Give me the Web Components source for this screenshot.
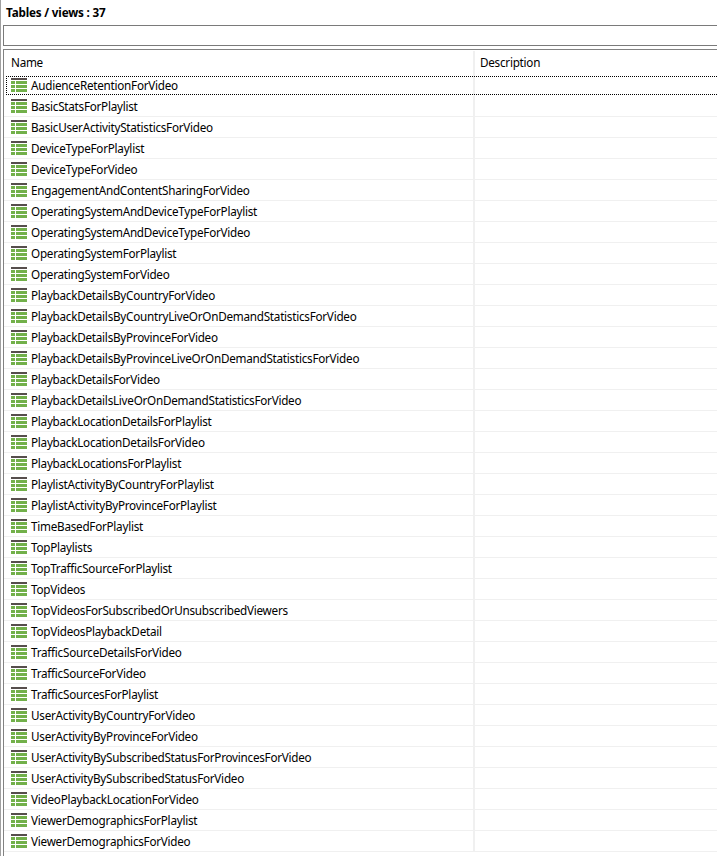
<!DOCTYPE html>
<html>
<head>
<meta charset="utf-8">
<title>Tables / views</title>
<style>
  html, body { margin: 0; height: 100%; background: #fff; overflow: hidden; }
  body { font: 11.7px "Noto Sans", sans-serif; letter-spacing: -0.25px; color: #000; }
</style>
</head>
<body>
<table-browser heading="Tables / views : 37"></table-browser>
<script>
const NAMES = [
  "AudienceRetentionForVideo", "BasicStatsForPlaylist", "BasicUserActivityStatisticsForVideo",
  "DeviceTypeForPlaylist", "DeviceTypeForVideo", "EngagementAndContentSharingForVideo",
  "OperatingSystemAndDeviceTypeForPlaylist", "OperatingSystemAndDeviceTypeForVideo",
  "OperatingSystemForPlaylist", "OperatingSystemForVideo", "PlaybackDetailsByCountryForVideo",
  "PlaybackDetailsByCountryLiveOrOnDemandStatisticsForVideo", "PlaybackDetailsByProvinceForVideo",
  "PlaybackDetailsByProvinceLiveOrOnDemandStatisticsForVideo", "PlaybackDetailsForVideo",
  "PlaybackDetailsLiveOrOnDemandStatisticsForVideo", "PlaybackLocationDetailsForPlaylist",
  "PlaybackLocationDetailsForVideo", "PlaybackLocationsForPlaylist", "PlaylistActivityByCountryForPlaylist",
  "PlaylistActivityByProvinceForPlaylist", "TimeBasedForPlaylist", "TopPlaylists",
  "TopTrafficSourceForPlaylist", "TopVideos", "TopVideosForSubscribedOrUnsubscribedViewers",
  "TopVideosPlaybackDetail", "TrafficSourceDetailsForVideo", "TrafficSourceForVideo",
  "TrafficSourcesForPlaylist", "UserActivityByCountryForVideo", "UserActivityByProvinceForVideo",
  "UserActivityBySubscribedStatusForProvincesForVideo", "UserActivityBySubscribedStatusForVideo",
  "VideoPlaybackLocationForVideo", "ViewerDemographicsForPlaylist", "ViewerDemographicsForVideo"
];

class TableIcon extends HTMLElement {
  constructor() {
    super();
    this.attachShadow({ mode: "open" }).innerHTML = `
      <style>
        :host { display: block; width: 16px; height: 16px; flex: none; }
        svg { display: block; }
      </style>
      <svg width="16" height="16" viewBox="0 0 16 16" shape-rendering="crispEdges">
        <rect x="0" y="0" width="16" height="2" fill="#564e4c"/>
        <path d="M0 3h4v3H0zM5 3h11v3H5zM0 7h4v3H0zM5 7h11v3H5zM0 11h4v3H0zM5 11h11v3H5z" fill="#72b04a"/>
      </svg>`;
  }
}
customElements.define("table-icon", TableIcon);

class TableRow extends HTMLElement {
  constructor() {
    super();
    this.attachShadow({ mode: "open" }).innerHTML = `
      <style>
        :host { display: grid; grid-template-columns: 471px 1fr; height: 21px; position: relative; }
        .name {
          display: flex; align-items: flex-start; gap: 4px; padding: 3px 0 0 7px;
          border-bottom: 1px solid #f0f0f0; border-right: 2px solid #f0f0f0;
          white-space: nowrap; overflow: hidden; box-sizing: border-box; line-height: 15px;
        }
        .desc { border-bottom: 1px solid #f0f0f0; }
        :host([focused]) .name, :host([focused]) .desc { border-bottom-color: transparent; }
        .focus { display: none; position: absolute; inset: 1px -4px 0 2px; height: 19px; box-sizing: border-box; border: 1px dotted #000; }
        :host([focused]) .focus { display: block; }
      </style>
      <div class="name"><table-icon></table-icon><slot></slot></div>
      <div class="desc"></div>
      <div class="focus"></div>`;
  }
}
customElements.define("table-row", TableRow);

class TableBrowser extends HTMLElement {
  constructor() {
    super();
    this.attachShadow({ mode: "open" }).innerHTML = `
      <style>
        :host { display: flex; flex-direction: column; height: 856px; box-sizing: border-box; border-left: 1px solid #a0a0a0; padding-left: 2px; }
        h1 { font: 700 11.7px/25px "Noto Sans", sans-serif; letter-spacing: -0.18px; margin: 0; padding-left: 3px; height: 25px; }
        .filter { height: 21px; box-sizing: border-box; border: 1px solid #7a7a7a; border-right: 0; margin-bottom: 3px; flex: none; }
        .list { flex: 1; border: 1px solid #828282; border-right: 0; border-bottom: 0; overflow: hidden; }
        .head { display: grid; grid-template-columns: 471px 1fr; height: 25px; padding-top: 1px; box-sizing: border-box; }
        .head div { padding: 3px 0 0 7px; box-sizing: border-box; line-height: 16px; }
        .head div:first-child { border-right: 2px solid #f0f0f0; }
        .head div:last-child { padding-left: 5px; }
      </style>
      <h1></h1>
      <div class="filter"></div>
      <div class="list">
        <div class="head"><div>Name</div><div>Description</div></div>
        <div class="rows"></div>
      </div>`;
  }
  connectedCallback() {
    this.shadowRoot.querySelector("h1").textContent = this.getAttribute("heading");
    const rows = this.shadowRoot.querySelector(".rows");
    NAMES.forEach((name, i) => {
      const row = document.createElement("table-row");
      row.textContent = name;
      if (i === 0) row.setAttribute("focused", "");
      rows.appendChild(row);
    });
  }
}
customElements.define("table-browser", TableBrowser);
</script>
</body>
</html>
